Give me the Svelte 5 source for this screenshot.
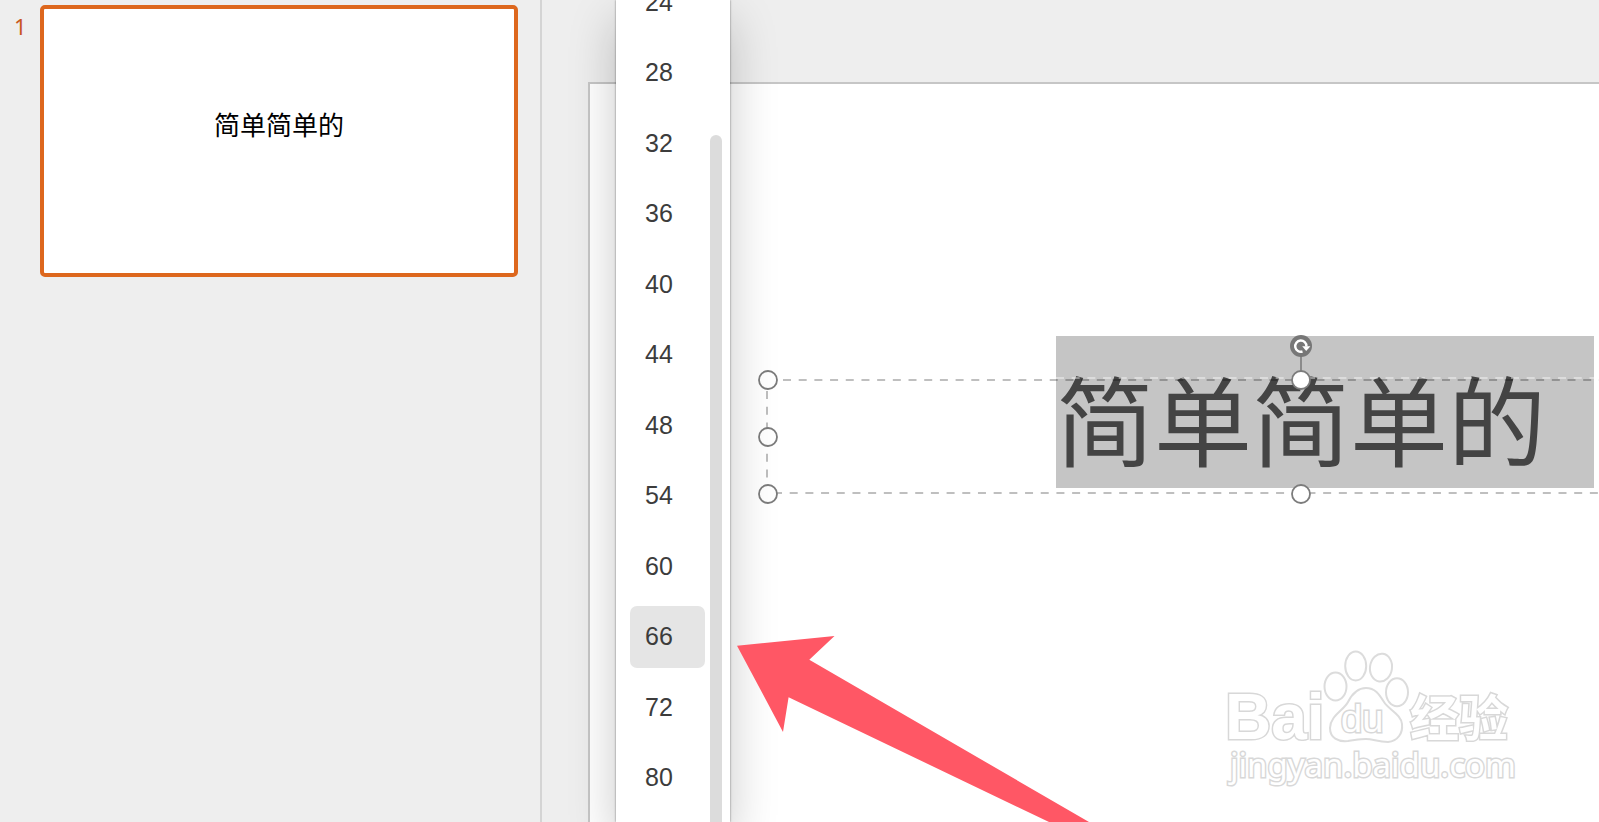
<script lang="ts">
  let sizes = [24, 28, 32, 36, 40, 44, 48, 54, 60, 66, 72, 80];
  let selected = 66;
  let title = "简单简单的";

  // resize handles of the text box, relative to its top left corner
  let handles = [
    { x: 0, y: 0 },
    { x: 0, y: 57 },
    { x: 0, y: 114 },
    { x: 533, y: 0 },
    { x: 533, y: 114 },
  ];
</script>

<main class="app">
  <aside class="sidebar">
    <span class="number">1</span>
    <button class="thumb" aria-label="Slide 1"><span>{title}</span></button>
  </aside>

  <section class="stage">
    <div class="slide">
      <div class="textbox">
        <h1 class="title"><span>{title}</span></h1>
        <svg class="frame" width="1067" height="114" viewBox="0 0 1067 114" fill="none">
          <line x1="288" y1="-2" x2="826" y2="-2" class="dash light" />
          <line x1="15" y1="0" x2="1067" y2="0" class="dash" />
          <line x1="6" y1="113" x2="1067" y2="113" class="dash" />
          <line x1="-1" y1="11" x2="-1" y2="104" class="dash" />
          <line x1="533" y1="-30" x2="533" y2="0" stroke="#777" stroke-width="1.5" />
          <circle cx="533" cy="-34" r="11" fill="#777" />
          <path d="M534.5 -28.5 A5.6 5.6 0 1 1 538.4 -33.5" stroke="#fff" stroke-width="2.4" />
          <path d="M534.2 -33.8 h8.2 l-4.2 4.8 z" fill="#fff" />
          {#each handles as h}
            <circle cx={h.x} cy={h.y} r="9" fill="#fff" stroke="#7c7c7c" stroke-width="1.8" />
          {/each}
        </svg>
      </div>
    </div>
  </section>

  <div class="dropdown">
    <ul>
      {#each sizes as size}
        <li>
          <button class="size" class:active={size === selected} on:click={() => (selected = size)}>{size}</button>
        </li>
      {/each}
    </ul>
    <div class="scrollbar"></div>
  </div>

  <svg class="arrow" width="352" height="187" viewBox="0 0 352 187">
    <path d="M0 10.7 L97.5 1 L72.3 24.7 L352 187 H312 L51.6 62.3 L46 97 Z" fill="#ff5765" />
  </svg>

  <svg class="watermark" width="300" height="150" viewBox="0 0 300 150">
    <g fill="#fff" stroke="#dcdcdc" stroke-width="2">
      <ellipse cx="115.5" cy="46.5" rx="11" ry="14" />
      <ellipse cx="135.7" cy="26" rx="10.5" ry="14.5" />
      <ellipse cx="161" cy="27.6" rx="11" ry="14" transform="rotate(8 161 27.6)" />
      <ellipse cx="177" cy="52.3" rx="11" ry="14" />
      <path
        d="M146 48 C137 48 132 54 128 62 C124 70 110 76 110 88 C110 98 118 102 128 101 C136 100 140 99 146 99 C153 99 158 102 168 102 C178 101 183 93 182 84 C181 74 169 70 164 62 C159 54 155 48 146 48 Z"
      />
    </g>
    <text class="logo" x="5" y="99">Bai</text>
    <text class="du" x="121" y="92">du</text>
    <text class="cn" x="190" y="96">经验</text>
    <text class="url" x="10" y="137">jingyan.baidu.com</text>
  </svg>
</main>

<style>
  :global(body) {
    background: #eee;
  }
  .app {
    position: relative;
    display: flex;
    height: 100vh;
    overflow: hidden;
    font-family: "Liberation Sans", "Noto Sans CJK SC", sans-serif;
  }
  .sidebar {
    display: flex;
    align-items: flex-start;
    box-sizing: border-box;
    flex: 0 0 542px;
    padding: 5px 22px 0 14px;
    border-right: 2px solid #d4d4d4;
  }
  .number {
    flex: 0 0 26px;
    padding-top: 7px;
    font-family: "Noto Sans", sans-serif;
    font-size: 22px;
    line-height: 28px;
    color: #c9571c;
  }
  .thumb {
    flex: 1;
    height: 272px;
    padding: 0 0 36px;
    border: 4px solid #dd671d;
    border-radius: 5px;
    background: #fff;
    color: #000;
    font-family: "Noto Sans CJK SC", sans-serif;
    font-size: 26px;
  }
  .stage {
    flex: 1;
    min-width: 0;
    padding: 82px 0 0 46px;
  }
  .slide {
    height: 100%;
    box-sizing: border-box;
    padding: 296px 0 0 178px;
    overflow: hidden;
    background: #fff;
    border: 2px solid #c6c6c6;
    border-width: 2px 0 0 2px;
  }
  .textbox {
    position: relative;
    width: 1067px;
    height: 114px;
  }
  .frame {
    position: absolute;
    top: 0;
    left: 0;
    overflow: visible;
  }
  .dash {
    stroke: #000;
    stroke-opacity: 0.25;
    stroke-width: 2;
    stroke-dasharray: 8 7.69;
  }
  .light {
    stroke: #fff;
    stroke-opacity: 0.4;
  }
  .title {
    position: absolute;
    top: -44px;
    left: 288px;
    margin: 0;
    padding: 8px 48px 0 0;
    background: #c5c5c5;
    color: #444;
    font-family: "Noto Sans CJK SC", sans-serif;
    font-size: 98px;
    font-weight: 400;
    line-height: 144px;
    white-space: nowrap;
  }
  .dropdown {
    position: absolute;
    top: 0;
    bottom: 0;
    left: 616px;
    width: 114px;
    background: #fff;
    box-shadow: 0 0 2px rgba(0, 0, 0, 0.5), 0 20px 48px rgba(0, 0, 0, 0.22);
  }
  ul {
    display: grid;
    grid-auto-rows: 1fr;
    height: calc(100vh + 24px);
    margin: -33px 0 0;
    padding: 0 25px 0 14px;
    list-style: none;
  }
  li {
    display: flex;
    align-items: center;
  }
  .size {
    width: 100%;
    height: 62px;
    padding: 0 15px;
    border: 0;
    border-radius: 7px;
    background: none;
    color: #3c3c3c;
    font-family: inherit;
    font-size: 25px;
    text-align: left;
  }
  .active {
    background: #e5e5e5;
  }
  .scrollbar {
    position: absolute;
    top: 135px;
    right: 8px;
    bottom: -12px;
    width: 12px;
    border-radius: 6px;
    background: #dcdcdc;
  }
  .arrow {
    position: absolute;
    left: 737px;
    bottom: 0;
  }
  .watermark {
    position: absolute;
    left: 1220px;
    top: 640px;
  }
  .watermark text {
    fill: #fff;
    stroke: #d8d8d8;
    stroke-width: 3;
    paint-order: stroke;
  }
  .logo {
    font-size: 64px;
    font-weight: 700;
  }
  .du {
    font-size: 38px;
  }
  .cn {
    font-family: "Noto Sans CJK SC", sans-serif;
    font-size: 49px;
    font-weight: 700;
  }
  .url {
    font-family: "Noto Sans", sans-serif;
    font-size: 33px;
  }
</style>
